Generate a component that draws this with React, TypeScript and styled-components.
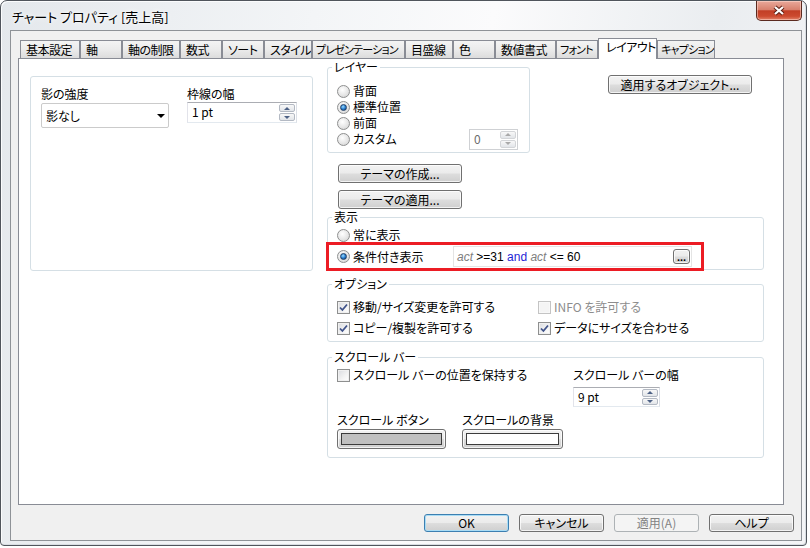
import styled, { createGlobalStyle, css } from "styled-components";

const GlobalStyle = createGlobalStyle`
  html, body {
    margin: 0;
    padding: 0;
    background: #ffffff;
  }

  body {
    font-family: "Noto Sans CJK JP", "Noto Sans", sans-serif;
    font-size: 12px;
    font-feature-settings: "palt";
    color: #000;
  }

  *, *::before, *::after {
    box-sizing: border-box;
  }
`;

const Window = styled.div`
  width: 807px;
  height: 546px;
  display: flex;
  flex-direction: column;
  padding: 0 4px 4px 9px;
  border: 1px solid #50555c;
  border-radius: 7px 7px 4px 4px;
  background: linear-gradient(
    100deg,
    #e4e8ec 0%,
    #f3f5f7 35%,
    #fbfbfc 55%,
    #eaedf0 80%,
    #f4f5f7 100%
  );
  box-shadow: inset 1px 1px 0 #fbfcfd, inset -1px -1px 0 #d9dde2;
`;

const TitleBar = styled.div`
  height: 29px;
  flex: none;
  display: flex;
  align-items: flex-start;
`;

const Title = styled.div`
  margin: 8px 0 0 2px;
  font-size: 13px;
  line-height: 16px;
  white-space: nowrap;
  text-shadow: 0 0 6px #fff, 0 0 3px #fff;
`;

const CloseButton = styled.button`
  margin-left: auto;
  width: 46px;
  height: 20px;
  padding: 0;
  display: flex;
  align-items: center;
  justify-content: center;
  border: 1px solid #5b2a20;
  border-top: none;
  border-radius: 0 0 5px 5px;
  background: linear-gradient(#e9a99b 0%, #d8816e 45%, #c23f26 52%, #cc4a2f 80%, #e3836a 100%);
  box-shadow: inset 0 0 0 1px rgba(255, 225, 215, 0.5);
`;

const Client = styled.div`
  flex: 1;
  display: flex;
  flex-direction: column;
  padding: 7px 7px 8px;
  border: 1px solid #8e9297;
  background: #f0f0f0;
`;

const TabRow = styled.div`
  height: 20px;
  display: flex;
  align-items: flex-end;
  padding-left: 2px;
`;

const Tab = styled.div<{ $w: number; $active?: boolean; $compact?: boolean }>`
  flex: none;
  width: ${(p) => p.$w}px;
  height: 18px;
  padding-left: ${(p) => (p.$compact ? 3 : 5)}px;
  border: 1px solid #898c95;
  border-bottom: none;
  background: linear-gradient(#f4f4f4 0%, #ebebeb 50%, #dcdcdc 100%);
  font-size: ${(p) => (p.$compact ? 11 : 12)}px;
  letter-spacing: ${(p) => (p.$compact ? -0.8 : -0.5)}px;
  line-height: 17px;
  white-space: nowrap;
  overflow: hidden;

  ${(p) =>
    p.$active &&
    css`
      position: relative;
      z-index: 1;
      height: 21px;
      margin-bottom: -1px;
      padding-left: 7px;
      background: #ffffff;
      line-height: 16px;
    `}
`;

const Pane = styled.div`
  width: 766px;
  height: 447px;
  display: grid;
  grid-template-columns: 283px 437px;
  column-gap: 14px;
  align-items: start;
  padding: 1px 0 0 11px;
  border: 1px solid #898c95;
  background: #ffffff;
`;

const Group = styled.fieldset<{ $w: number }>`
  width: ${(p) => p.$w}px;
  min-width: 0;
  margin: 0;
  border: 1px solid #d5dfe5;
  border-radius: 3px;
`;

const Legend = styled.legend`
  margin-left: -5px;
  padding: 0 2px;
  line-height: 14px;
`;

const ShadowGroup = styled(Group)`
  height: 195px;
  margin-top: 16px;
  padding: 9px 10px;
  display: grid;
  grid-template-columns: 128px 110px;
  column-gap: 18px;
  align-content: start;
`;

const Field = styled.div`
  display: flex;
  flex-direction: column;
  align-items: flex-start;
`;

const FieldLabel = styled.div`
  height: 16px;
  line-height: 16px;
  white-space: nowrap;
`;

const Select = styled.div`
  width: 128px;
  height: 25px;
  margin-top: 1px;
  display: flex;
  align-items: center;
  padding: 0 3px 0 4px;
  border: 1px solid #cbcbcb;
  border-radius: 2px;
  background: #ffffff;
`;

const DropArrow = styled.span`
  margin-left: auto;
  width: 0;
  height: 0;
  border-left: 4px solid transparent;
  border-right: 4px solid transparent;
  border-top: 4px solid #000;
`;

const SpinBox = styled.div<{ $w: number; $h: number; $disabled?: boolean }>`
  width: ${(p) => p.$w}px;
  height: ${(p) => p.$h}px;
  flex: none;
  display: flex;
  border: 1px solid;
  border-color: #abadb3 #dbdfe6 #e3e9ef #e2e3ea;
  background: #ffffff;

  ${(p) =>
    p.$disabled &&
    css`
      border-color: #cfd1d4;
      color: #6d6d6d;
    `}
`;

const SpinValue = styled.span`
  flex: 1;
  padding: 2px 0 0 4px;
  line-height: 14px;
  white-space: nowrap;
`;

const Spinner = styled.span`
  width: 18px;
  display: flex;
  flex-direction: column;
  gap: 1px;
  padding: 1px;
`;

const SpinArrow = styled.span<{ $down?: boolean; $disabled?: boolean }>`
  flex: 1;
  display: flex;
  align-items: center;
  justify-content: center;
  border: 1px solid ${(p) => (p.$disabled ? "#d3d5d8" : "#b3b9c3")};
  border-radius: 2px;
  background: linear-gradient(#f8f8f8, #e2e5e9);

  &::before {
    content: "";
    border-left: 3px solid transparent;
    border-right: 3px solid transparent;
    ${(p) =>
      p.$down
        ? `border-top: 3px solid ${p.$disabled ? "#a9a9a9" : "#4d6185"};`
        : `border-bottom: 3px solid ${p.$disabled ? "#a9a9a9" : "#4d6185"};`}
  }
`;

const RightColumn = styled.div`
  display: flex;
  flex-direction: column;
  align-items: flex-start;
`;

const TopRow = styled.div`
  display: flex;
  align-items: flex-start;
`;

const LayerGroup = styled(Group)`
  padding: 9px 11px 5px 9px;
  display: flex;
  flex-direction: column;
`;

const OptionRow = styled.label<{ $w?: number; $disabled?: boolean }>`
  flex: none;
  height: 16px;
  display: flex;
  align-items: center;
  gap: 3px;
  line-height: 16px;
  white-space: nowrap;
  color: ${(p) => (p.$disabled ? "#8d8d8d" : "#000")};
  ${(p) => p.$w && `width: ${p.$w}px;`}
`;

const SpreadRow = styled.div`
  height: 16px;
  display: flex;
  align-items: center;
  justify-content: space-between;
`;

const Radio = styled.span<{ $checked?: boolean }>`
  position: relative;
  flex: none;
  width: 13px;
  height: 13px;
  border: 1px solid #8e8f8f;
  border-radius: 50%;
  background: radial-gradient(circle at 40% 35%, #ffffff 0%, #e6e6e6 55%, #cdcdcd 100%);

  ${(p) =>
    p.$checked &&
    css`
      &::after {
        content: "";
        position: absolute;
        inset: 2px;
        border: 1px solid #1f3f66;
        border-radius: 50%;
        background: radial-gradient(circle at 40% 35%, #9bdcff 0%, #2a7fd0 50%, #0b3a6e 100%);
      }
    `}
`;

const Checkbox = styled.span<{ $disabled?: boolean }>`
  flex: none;
  width: 13px;
  height: 13px;
  display: flex;
  align-items: center;
  justify-content: center;
  border: 1px solid ${(p) => (p.$disabled ? "#c4c4c4" : "#8e8f8f")};
  background: ${(p) =>
    p.$disabled ? "#f4f4f4" : "linear-gradient(135deg, #d9dbdf 0%, #f4f4f4 60%, #ffffff 100%)"};
  box-shadow: inset 0 0 0 1px ${(p) => (p.$disabled ? "#f8f8f8" : "#f0f0f0")};
`;

const Button = styled.button<{ $w: number; $h?: number; $focused?: boolean }>`
  flex: none;
  width: ${(p) => p.$w}px;
  height: ${(p) => p.$h ?? 19}px;
  padding: 0;
  border: 1px solid #707070;
  border-radius: 3px;
  background: linear-gradient(#f2f2f2 0%, #ebebeb 48%, #dddddd 52%, #cfcfcf 100%);
  box-shadow: inset 0 0 0 1px rgba(255, 255, 255, 0.75);
  font-family: "Noto Sans CJK JP", "Noto Sans", sans-serif;
  font-feature-settings: "palt";
  font-size: 12px;
  line-height: 14px;
  color: #000;

  ${(p) =>
    p.$focused &&
    css`
      border-color: #3c7fb1;
      box-shadow: inset 0 0 0 1px #a9dcf5;
    `}

  &:disabled {
    border-color: #adb2b5;
    background: #f4f4f4;
    box-shadow: none;
    color: #838383;
  }
`;

const ObjectButton = styled(Button)`
  margin: 15px 0 0 78px;
`;

const ThemeButton = styled(Button)<{ $gap: number }>`
  margin: ${(p) => p.$gap}px 0 0 11px;
`;

const DisplayGroup = styled(Group)`
  margin-top: 1px;
  padding: 3px 9px 2px;
  display: flex;
  flex-direction: column;
  gap: 3px;
`;

const ConditionRow = styled.div`
  position: relative;
  height: 21px;
  display: flex;
  align-items: center;
`;

const Highlight = styled.div`
  position: absolute;
  left: -11px;
  top: -4px;
  width: 378px;
  height: 29px;
  border: 3px solid #ec1c24;
  pointer-events: none;
`;

const Expression = styled.div`
  width: 239px;
  height: 21px;
  display: flex;
  align-items: center;
  padding-left: 3px;
  border: 1px solid #e4e4e4;
  background: #ffffff;
  font-family: "Liberation Sans", Arial, sans-serif;
  font-size: 12px;
  white-space: pre;
`;

const Token = styled.span<{ $kind: "field" | "op" | "keyword" }>`
  color: ${(p) => (p.$kind === "field" ? "#808080" : p.$kind === "keyword" ? "#1f1fd6" : "#000")};
  font-style: ${(p) => (p.$kind === "field" ? "italic" : "normal")};
`;

const EllipsisButton = styled(Button)`
  margin: 0 1px 0 auto;
  line-height: 8px;
  font-family: "Liberation Sans", Arial, sans-serif;
  font-size: 11px;
  font-weight: bold;
`;

const OptionsGroup = styled(Group)`
  margin-top: 7px;
  padding: 8px 9px 5px;
  display: grid;
  grid-template-columns: 201px 1fr;
  row-gap: 5px;
`;

const ScrollGroup = styled(Group)`
  margin-top: 8px;
  padding: 3px 9px 8px;
  display: flex;
  flex-direction: column;
`;

const ScrollTop = styled.div`
  display: flex;
  align-items: flex-start;
`;

const ScrollWidth = styled.div`
  display: flex;
  flex-direction: column;
  gap: 4px;
`;

const ScrollColors = styled.div`
  margin-top: 5px;
  display: grid;
  grid-template-columns: 125px auto;
`;

const ColorButton = styled(Button)`
  height: 20px;
  margin-top: 1px;
  display: flex;
  padding: 3px;
`;

const Swatch = styled.span<{ $color: string }>`
  flex: 1;
  border: 1px solid #3c3c3c;
  background: ${(p) => p.$color};
`;

const Footer = styled.div`
  display: flex;
  justify-content: flex-end;
  gap: 10px;
  margin-top: 9px;
`;

const tabs = [
  { label: "基本設定", w: 60 },
  { label: "軸", w: 42 },
  { label: "軸の制限", w: 58 },
  { label: "数式", w: 42 },
  { label: "ソート", w: 42 },
  { label: "スタイル", w: 48 },
  { label: "プレゼンテーション", w: 93, compact: true },
  { label: "目盛線", w: 48 },
  { label: "色", w: 42 },
  { label: "数値書式", w: 61 },
  { label: "フォント", w: 42, compact: true },
  { label: "レイアウト", w: 59, active: true },
  { label: "キャプション", w: 58, compact: true },
];

function CheckMark() {
  return (
    <svg width="9" height="9" viewBox="0 0 9 9">
      <path d="M1 4.5 L3.4 7 L8 1.5" fill="none" stroke="#3f5289" strokeWidth="1.8" />
    </svg>
  );
}

function CheckOption({
  label,
  checked,
  disabled,
}: {
  label: string;
  checked?: boolean;
  disabled?: boolean;
}) {
  return (
    <OptionRow $disabled={disabled}>
      <Checkbox $disabled={disabled}>{checked && <CheckMark />}</Checkbox>
      {label}
    </OptionRow>
  );
}

function Spin({
  value,
  w,
  h,
  disabled,
}: {
  value: string;
  w: number;
  h: number;
  disabled?: boolean;
}) {
  return (
    <SpinBox $w={w} $h={h} $disabled={disabled}>
      <SpinValue>{value}</SpinValue>
      <Spinner>
        <SpinArrow $disabled={disabled} />
        <SpinArrow $down $disabled={disabled} />
      </Spinner>
    </SpinBox>
  );
}

export default function App() {
  return (
    <>
      <GlobalStyle />
      <Window>
        <TitleBar>
          <Title>チャート プロパティ [売上高]</Title>
          <CloseButton aria-label="閉じる">
            <svg width="14" height="11" viewBox="0 0 14 11">
              <path d="M3 2 L11 9 M11 2 L3 9" stroke="#5a1c10" strokeWidth="4.2" />
              <path d="M3 2 L11 9 M11 2 L3 9" stroke="#ffffff" strokeWidth="2.3" />
            </svg>
          </CloseButton>
        </TitleBar>

        <Client>
          <TabRow>
            {tabs.map((t) => (
              <Tab key={t.label} $w={t.w} $active={t.active} $compact={t.compact}>
                {t.label}
              </Tab>
            ))}
          </TabRow>

          <Pane>
            <ShadowGroup $w={283}>
              <Field>
                <FieldLabel>影の強度</FieldLabel>
                <Select>
                  影なし
                  <DropArrow />
                </Select>
              </Field>
              <Field>
                <FieldLabel>枠線の幅</FieldLabel>
                <Spin value="1 pt" w={110} h={21} />
              </Field>
            </ShadowGroup>

            <RightColumn>
              <TopRow>
                <LayerGroup $w={203}>
                  <Legend>レイヤー</Legend>
                  <OptionRow>
                    <Radio />
                    背面
                  </OptionRow>
                  <OptionRow>
                    <Radio $checked />
                    標準位置
                  </OptionRow>
                  <OptionRow>
                    <Radio />
                    前面
                  </OptionRow>
                  <SpreadRow>
                    <OptionRow>
                      <Radio />
                      カスタム
                    </OptionRow>
                    <Spin value="0" w={49} h={21} disabled />
                  </SpreadRow>
                </LayerGroup>
                <ObjectButton $w={144}>適用するオブジェクト...</ObjectButton>
              </TopRow>

              <ThemeButton $w={124} $gap={11}>
                テーマの作成...
              </ThemeButton>
              <ThemeButton $w={124} $gap={7}>
                テーマの適用...
              </ThemeButton>

              <DisplayGroup $w={437}>
                <Legend>表示</Legend>
                <OptionRow>
                  <Radio />
                  常に表示
                </OptionRow>
                <ConditionRow>
                  <OptionRow $w={116}>
                    <Radio $checked />
                    条件付き表示
                  </OptionRow>
                  <Expression>
                    <Token $kind="field">act</Token>
                    <Token $kind="op"> &gt;=31 </Token>
                    <Token $kind="keyword">and</Token>
                    <Token $kind="op"> </Token>
                    <Token $kind="field">act</Token>
                    <Token $kind="op"> &lt;= 60</Token>
                    <EllipsisButton $w={17} $h={15}>
                      ...
                    </EllipsisButton>
                  </Expression>
                  <Highlight />
                </ConditionRow>
              </DisplayGroup>

              <OptionsGroup $w={437}>
                <Legend>オプション</Legend>
                <CheckOption label="移動/サイズ変更を許可する" checked />
                <CheckOption label="INFO を許可する" disabled />
                <CheckOption label="コピー/複製を許可する" checked />
                <CheckOption label="データにサイズを合わせる" checked />
              </OptionsGroup>

              <ScrollGroup $w={437}>
                <Legend>スクロール バー</Legend>
                <ScrollTop>
                  <OptionRow $w={236}>
                    <Checkbox />
                    スクロール バーの位置を保持する
                  </OptionRow>
                  <ScrollWidth>
                    <FieldLabel>スクロール バーの幅</FieldLabel>
                    <Spin value="9 pt" w={87} h={20} />
                  </ScrollWidth>
                </ScrollTop>
                <ScrollColors>
                  <Field>
                    <FieldLabel>スクロール ボタン</FieldLabel>
                    <ColorButton $w={109}>
                      <Swatch $color="#c0c0c0" />
                    </ColorButton>
                  </Field>
                  <Field>
                    <FieldLabel>スクロールの背景</FieldLabel>
                    <ColorButton $w={101}>
                      <Swatch $color="#ffffff" />
                    </ColorButton>
                  </Field>
                </ScrollColors>
              </ScrollGroup>
            </RightColumn>
          </Pane>

          <Footer>
            <Button $w={85} $h={18} $focused>
              OK
            </Button>
            <Button $w={85} $h={18}>
              キャンセル
            </Button>
            <Button $w={85} $h={18} disabled>
              適用(A)
            </Button>
            <Button $w={85} $h={18}>
              ヘルプ
            </Button>
          </Footer>
        </Client>
      </Window>
    </>
  );
}
